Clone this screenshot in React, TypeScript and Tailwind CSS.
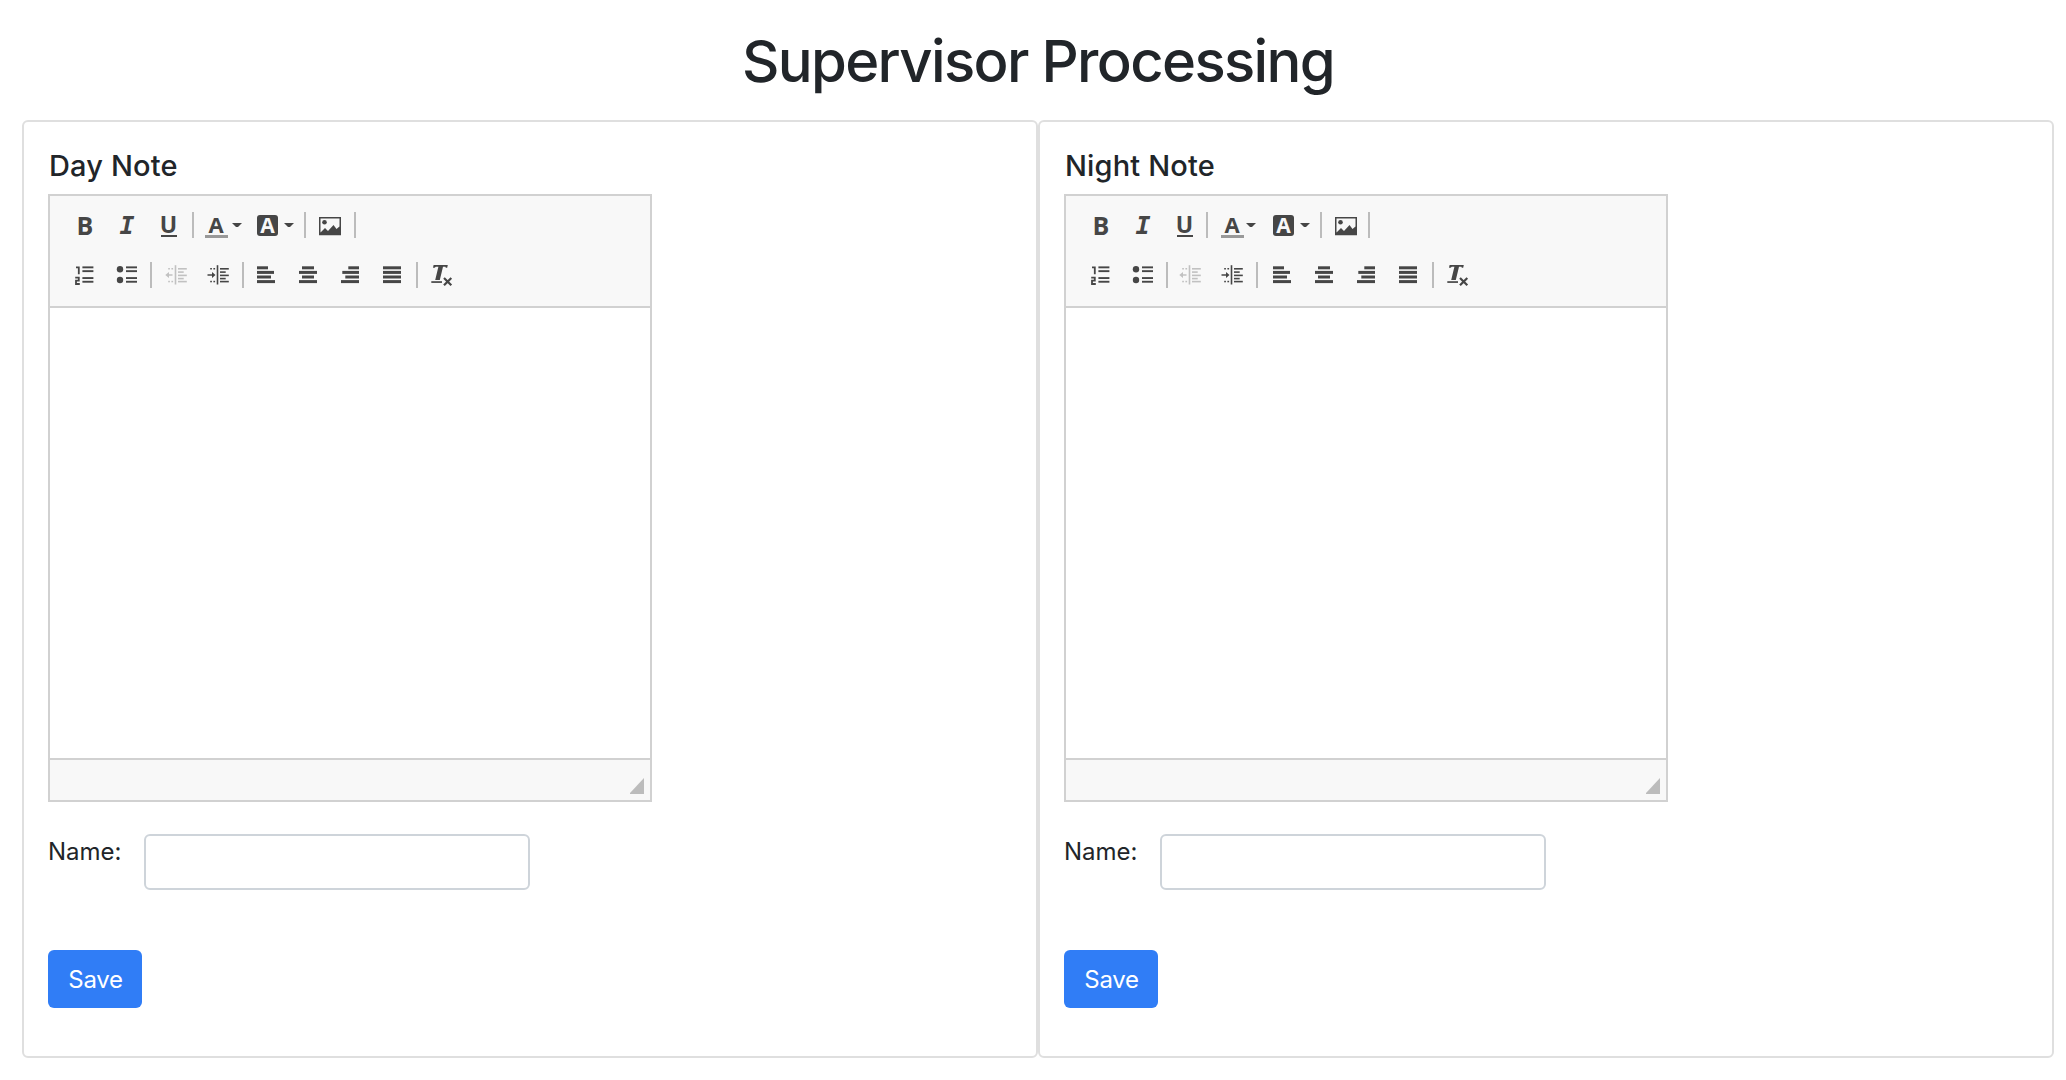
import React from "react";

const ink = "#464646";

function Icon({ children, className = "" }: { children: React.ReactNode; className?: string }) {
  return (
    <svg width="24" height="24" viewBox="0 0 24 24" className={`block shrink-0 overflow-visible ${className}`} fill={ink}>
      {children}
    </svg>
  );
}

const Sep = ({ className = "" }: { className?: string }) => (
  <span className={`block h-[26px] w-[2px] shrink-0 bg-[#bcbcbc] ${className}`} />
);

const Caret = ({ className = "" }: { className?: string }) => (
  <svg width="10" height="4" viewBox="0 0 10 4" fill={ink} className={`block shrink-0 ${className}`}>
    <path d="M0 0H10L6 4H4Z" />
  </svg>
);

const Letter = ({ children, className }: { children: string; className: string }) => (
  <span className={`flex h-6 w-6 shrink-0 items-center justify-center font-bold text-[#464646] ${className}`}>
    {children}
  </span>
);

function Bars({ rows, className }: { rows: [number, number][]; className?: string }) {
  return (
    <Icon className={className}>
      {rows.map(([x, w], i) => (
        <rect key={i} x={x} y={3.3 + i * 4.6} width={w} height="3" />
      ))}
    </Icon>
  );
}

const ListLines = ({ x }: { x: number }) => (
  <>
    {[3.4, 7.2, 14.1, 17.8].map((y) => (
      <rect key={y} x={x} y={y} width="11" height="1.9" />
    ))}
  </>
);

function IndentLines() {
  return (
    <>
      <rect x="11.7" y="2.2" width="1.6" height="19.3" />
      <rect x="15" y="5" width="8.8" height="1.6" />
      <rect x="15" y="8.3" width="5.7" height="1.6" />
      <rect x="15" y="11.6" width="8.8" height="1.6" />
      <rect x="15" y="14.8" width="5.7" height="1.6" />
      <rect x="15" y="17.8" width="8.8" height="1.6" />
      {[5, 17.8].map((y) => (
        <React.Fragment key={y}>
          <rect x="5.2" y={y} width="1.7" height="1.5" />
          <rect x="8.4" y={y} width="1.7" height="1.5" />
        </React.Fragment>
      ))}
    </>
  );
}

function Toolbar({ tight }: { tight: boolean }) {
  return (
    <div className="h-[112px] border-b-2 border-[#d1d1d1] bg-[#f8f8f8] pt-4 pl-[23px]">
      <div className="flex h-[26px] items-center">
        <Letter className="font-['Open_Sans'] text-[25px] leading-6">B</Letter>
        <Letter className="ml-[18px] pt-[2px] font-['DejaVu_Sans_Mono'] text-[25px] leading-[22px] italic">I</Letter>
        <span className="relative ml-[18px] block">
          <Letter className="pr-px pb-px font-['Open_Sans'] text-[23px] leading-[23px]">U</Letter>
          <span className="absolute left-1 top-[22px] h-[2px] w-4 bg-[#464646]" />
        </span>
        <Sep className={tight ? "mr-[2px] ml-[9px]" : "ml-[11px]"} />
        <span className="relative ml-[11px] block">
          <Letter className="pr-[2px] pb-px font-['Open_Sans'] text-[22px] leading-[23px]">A</Letter>
          <span className="absolute left-0 top-[22px] h-[3px] w-[23px] bg-[#999]" />
        </span>
        <Caret className={tight ? "mr-[2px] ml-[1px]" : "ml-[3px]"} />
        <span className="ml-[15px] flex h-[21px] w-[21px] shrink-0 items-center justify-center rounded-[3px] bg-[#464646] font-['Open_Sans'] text-[21px] leading-[21px] font-bold text-[#f8f8f8]">A</span>
        <Caret className="ml-[6px]" />
        <Sep className="ml-[10px]" />
        <Icon className="ml-3">
          <path fillRule="evenodd" d="M1 4H23V22.3H1ZM2.5 5.5V19.5L7 15L10 18L15.5 12L18.5 16L21.5 13.5V5.5Z" />
          <circle cx="6.5" cy="9.3" r="2.3" />
        </Icon>
        <Sep className={tight ? "ml-[10px]" : "ml-3"} />
      </div>
      <div className="mt-6 flex h-[26px] items-center">
        <Icon>
          <path fill="none" stroke={ink} strokeWidth="1.8" d="M3 4.4H5.8V11.3M2.2 14.6H5.8V17.6H3V21H6.8" />
          <ListLines x={9.4} />
        </Icon>
        <Icon className="ml-[18px]">
          <circle cx="5" cy="6.3" r="3.2" />
          <circle cx="5" cy="17" r="3.2" />
          <ListLines x={11} />
        </Icon>
        <Sep className="ml-[11px]" />
        <Icon className={tight ? "ml-[9px] opacity-30" : "ml-[11px] opacity-30"}>
          <IndentLines />
          <path d="M2.3 12L6 9V11.3H9.5V12.7H6V15Z" />
        </Icon>
        <Icon className="ml-[18px]">
          <IndentLines />
          <path d="M10.5 12L7 9V11.3H2.5V12.7H7V15Z" />
        </Icon>
        <Sep className={tight ? "mr-[2px] ml-[13px]" : "ml-[13px]"} />
        <Bars className="ml-[10px]" rows={[[3, 11], [3, 17], [3, 14], [3, 18]]} />
        <Bars className="ml-[18px]" rows={[[6, 12], [3, 18], [6, 12], [3, 18]]} />
        <Bars className="ml-[18px]" rows={[[10.3, 10.7], [4.3, 16.7], [7.3, 13.7], [3, 18]]} />
        <Bars className="ml-[18px]" rows={[[3, 18], [3, 18], [3, 18], [3, 18]]} />
        <Sep className="ml-3" />
        <Icon className="ml-3">
          <path d="M3.6 2H17.8L17.2 4.8H15.8L15.4 3.8H13L9.8 17H5.2L8.4 3.8H5.8L4.6 4.8H3Z" />
          <rect x="1.3" y="18.2" width="10.7" height="1.7" />
          <path d="M14 15L21.3 22.3M21.3 15L14 22.3" stroke={ink} strokeWidth="2.2" />
        </Icon>
      </div>
    </div>
  );
}

function NoteCard({ title, tight = false }: { title: string; tight?: boolean }) {
  return (
    <section className="h-[938px] w-[1016px] rounded-[6px] border-2 border-[#dfdfdf] bg-white px-6 pt-6">
      <h5 className="h-12 pl-px text-[29px] leading-[40px] font-medium tracking-[0.15px]">{title}</h5>
      <div className="flex h-[608px] w-[604px] flex-col border-2 border-[#d1d1d1]">
        <Toolbar tight={tight} />
        <div className="flex-1 bg-white" />
        <div className="flex h-[42px] items-end justify-end border-t-2 border-[#d1d1d1] bg-[#f8f8f8] pr-[6px] pb-[6px]">
          <svg width="14" height="16" viewBox="0 0 14 16" fill="#bcbcbc">
            <path d="M14 0V16H0V15Z" />
          </svg>
        </div>
      </div>
      <div className="mt-8 flex items-start">
        <label className="w-24 text-[24px] leading-[36px]">Name:</label>
        <input className="h-14 w-[386px] rounded-[6px] border-2 border-[#ced4da] bg-white px-4 outline-none" />
      </div>
      <button className="mt-[60px] h-[58px] w-[94px] rounded-[6px] bg-[#307df6] pt-px pl-px text-[24px] tracking-[-0.3px] text-white">Save</button>
    </section>
  );
}

export default function App() {
  return (
    <main className="h-[1080px] w-[2066px] overflow-hidden bg-white pl-[22px] font-['Inter',sans-serif] text-[#212529]">
      <h1 className="h-[120px] w-[2032px] pt-[25px] text-center text-[58px] leading-[72px] font-medium tracking-[-1.65px]">Supervisor Processing</h1>
      <div className="flex">
        <NoteCard title="Day Note" />
        <NoteCard title="Night Note" tight />
      </div>
    </main>
  );
}
